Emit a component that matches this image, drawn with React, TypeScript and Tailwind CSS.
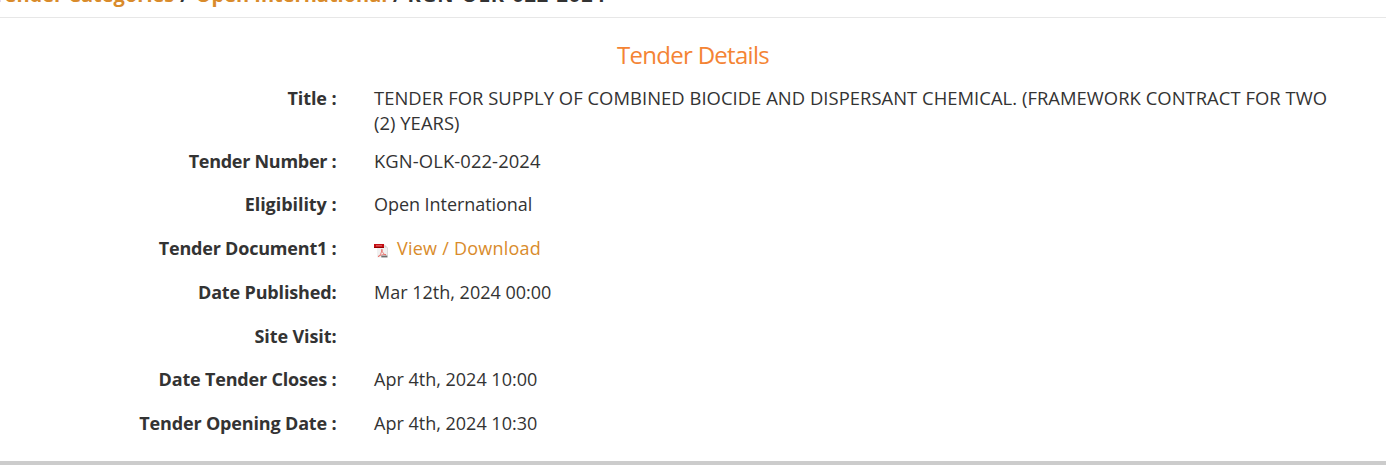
import type { ReactNode } from 'react';

interface DetailRowProps {
  label: string;
  labelClass: string;
  valueClass?: string;
  rowClass?: string;
  children?: ReactNode;
}

function DetailRow({ label, labelClass, valueClass = '', rowClass = 'h-[43.75px]', children }: DetailRowProps) {
  return (
    <div className={`flex ${rowClass}`}>
      <dt className="flex w-[336.5px] shrink-0 justify-end whitespace-nowrap font-bold">
        <span className={labelClass}>{label}</span>
      </dt>
      <dd className={`ml-[37.5px] whitespace-nowrap ${valueClass}`}>{children}</dd>
    </div>
  );
}

function PdfIcon() {
  return (
    <svg width="14" height="14" viewBox="0 0 14 14" className="mt-[8px] shrink-0">
      <path d="M3 0.5h7.5L13.5 3.5v10H3z" fill="#f1f1f1" />
      <path d="M10.5 0.5v3h3zM13 3.5h.7v10H13z" fill="#d2d2d2" />
      <path d="M0 0h10v4H0z" fill="#c40d12" />
      <path d="M0 3h10v1H0z" fill="#960000" />
      <path d="M2.4 1.8h1.2M4.4 1.8h1.2M6.4 1.8h1.2" stroke="#f3b5b5" strokeWidth="1" />
      <path d="M4 12.6c2-.6 3.6-3.4 3.9-7.4.3 3.4 1.8 5.4 4.2 5.6-2.5-.8-5 .1-8.1 1.8z" fill="none" stroke="#e7645e" strokeWidth="0.8" />
      <path d="M7.3 11.6h6v1.8h-6z" fill="#6f6f6f" />
    </svg>
  );
}

export default function App() {
  return (
    <div className="h-[465px] overflow-hidden bg-white font-['Open_Sans',sans-serif] text-[18px] leading-[25px] text-[#333]">
      <nav className="flex h-[18px] items-start border-b border-[#e7e7e7]">
        <div className="-ml-[7px] -mt-[19px] flex w-max whitespace-pre text-[20px] font-bold leading-[28px]">
          <a className="text-[#d98b2b]">Tender Categories</a>
          <span className="tracking-[0.9px]"> / </span>
          <a className="text-[#d98b2b]">Open International</a>
          <span className="tracking-[0.5px]"> / </span>
          <span className="tracking-[0.9px]">KGN-OLK-022-2024</span>
        </div>
      </nav>

      <h3 className="mt-[20px] text-center text-[24px] leading-[34px] tracking-[-0.72px] text-[#f48434]">Tender Details</h3>

      <dl className="mt-[14px] h-[379px] border-b-4 border-[#ccc]">
        <DetailRow
          label="Title :"
          labelClass="tracking-[-0.1px]"
          valueClass="-mt-px text-[18.4px] tracking-[0.04px]"
          rowClass="h-[62.7px]"
        >
          TENDER FOR SUPPLY OF COMBINED BIOCIDE AND DISPERSANT CHEMICAL. (FRAMEWORK CONTRACT FOR TWO
          <br />
          (2) YEARS)
        </DetailRow>
        <DetailRow label="Tender Number :" labelClass="tracking-[-0.27px]" valueClass="-mt-px text-[18.4px] tracking-[0.1px]">
          KGN-OLK-022-2024
        </DetailRow>
        <DetailRow label="Eligibility :" labelClass="tracking-[-0.05px]" valueClass="tracking-[-0.05px]">
          Open International
        </DetailRow>
        <DetailRow label="Tender Document1 :" labelClass="tracking-[-0.2px]" valueClass="tracking-[0.23px]">
          <div className="flex gap-[9px]">
            <PdfIcon />
            <a className="text-[#d98b2b]">View / Download</a>
          </div>
        </DetailRow>
        <DetailRow label="Date Published:" labelClass="tracking-[-0.15px]">
          Mar 12th, 2024 00:00
        </DetailRow>
        <DetailRow label="Site Visit:" labelClass="tracking-[-0.1px]" />
        <DetailRow label="Date Tender Closes :" labelClass="tracking-[-0.18px]">
          Apr 4th, 2024 10:00
        </DetailRow>
        <DetailRow label="Tender Opening Date :" labelClass="tracking-[-0.16px]">
          Apr 4th, 2024 10:30
        </DetailRow>
      </dl>
    </div>
  );
}
